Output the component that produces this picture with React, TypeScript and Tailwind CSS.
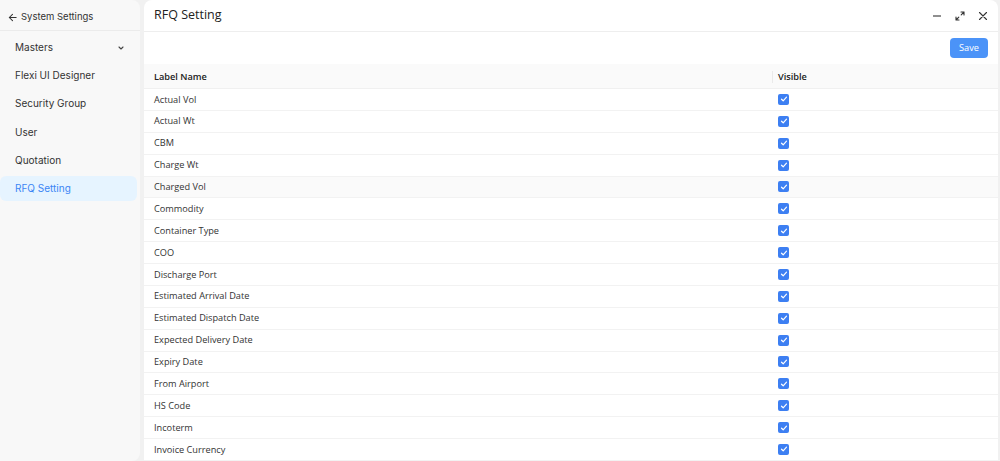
import React from "react";

const rows = [
  "Actual Vol",
  "Actual Wt",
  "CBM",
  "Charge Wt",
  "Charged Vol",
  "Commodity",
  "Container Type",
  "COO",
  "Discharge Port",
  "Estimated Arrival Date",
  "Estimated Dispatch Date",
  "Expected Delivery Date",
  "Expiry Date",
  "From Airport",
  "HS Code",
  "Incoterm",
  "Invoice Currency",
];

const menu = ["Masters", "Flexi UI Designer", "Security Group", "User", "Quotation", "RFQ Setting"];

function Check() {
  return (
    <span className="flex h-[11px] w-[11px] items-center justify-center rounded-[2px] bg-[#3d7ff2]">
      <svg width="8" height="8" viewBox="0 0 8 8" fill="none">
        <path d="M1.5 4.2 L3.2 5.8 L6.5 2.2" stroke="white" strokeWidth="1.2" strokeLinecap="round" strokeLinejoin="round" />
      </svg>
    </span>
  );
}

export default function App() {
  return (
    <div className="flex h-[461px] w-[1000px] overflow-hidden bg-[#f1f1f1]" style={{ fontFamily: "'Open Sans', 'Noto Sans', sans-serif" }}>
      <aside className="flex w-[140px] shrink-0 flex-col rounded-r-lg bg-[#f8f8f8]" style={{ fontFamily: "Inter, 'Noto Sans', sans-serif" }}>
        <div className="flex h-[31px] items-center gap-[3px] border-b border-[#ebebeb] pl-[7px] pt-[5px] text-[9.5px] text-[#333]">
          <svg width="11" height="11" viewBox="0 0 12 12" fill="none">
            <path d="M10 6H2.5M6 2.5L2.5 6L6 9.5" stroke="#333" strokeWidth="1.1" strokeLinecap="round" strokeLinejoin="round" />
          </svg>
          <span>System Settings</span>
        </div>
        <nav className="flex flex-col gap-[3.2px] pt-[4px] pr-[3px]">
          {menu.map((m) => {
            const active = m === "RFQ Setting";
            return (
              <div
                key={m}
                className={`flex h-[25px] items-center justify-between rounded-md pl-[15px] pr-[12px] text-[10px] ${
                  active ? "bg-[#e6f4ff] text-[#3b86f5]" : "text-[#333]"
                }`}
              >
                <span>{m}</span>
                {m === "Masters" && (
                  <svg width="8" height="8" viewBox="0 0 8 8" fill="none">
                    <path d="M2 3L4 5L6 3" stroke="#444" strokeWidth="1.1" strokeLinecap="round" strokeLinejoin="round" />
                  </svg>
                )}
              </div>
            );
          })}
        </nav>
      </aside>

      <main className="ml-[4px] mr-[2px] flex flex-1 flex-col rounded-t-lg bg-white">
        <div className="flex h-[32px] shrink-0 items-center justify-between border-b border-[#eeeeee] pl-[10px] pr-[10px]">
          <span className="text-[12.5px] text-[#222]">RFQ Setting</span>
          <div className="flex items-center gap-[13px] text-[#333]">
            <svg width="10" height="10" viewBox="0 0 10 10" fill="none">
              <path d="M1 5H9" stroke="#333" strokeWidth="1.1" />
            </svg>
            <svg width="10" height="10" viewBox="0 0 10 10" fill="none">
              <path d="M6 1H9V4M9 1L6.2 3.8M4 9H1V6M1 9L3.8 6.2" stroke="#333" strokeWidth="1.1" strokeLinecap="round" strokeLinejoin="round" />
            </svg>
            <svg width="10" height="10" viewBox="0 0 10 10" fill="none">
              <path d="M1.5 1.5L8.5 8.5M8.5 1.5L1.5 8.5" stroke="#333" strokeWidth="1.1" strokeLinecap="round" />
            </svg>
          </div>
        </div>
        <div className="flex h-[32px] shrink-0 items-center justify-end pr-[10px]">
          <button className="h-[20px] w-[38px] rounded-[4px] bg-[#4b93f8] text-[9.2px] text-white">Save</button>
        </div>
        <div className="flex flex-col">
          <div className="flex h-[25px] items-center border-b border-[#f0f0f0] bg-[#fafafa] pt-[1px] text-[9.2px] font-semibold text-[#222]">
            <div className="w-[628px] pl-[10px]">Label Name</div>
            <div className="flex h-full items-center">
              <span className="h-[12px] w-px bg-[#eaeaea]" />
              <span className="pl-[5px]">Visible</span>
            </div>
          </div>
          {rows.map((r) => (
            <div
              key={r}
              className={`flex h-[21.875px] shrink-0 items-center border-b border-[#f2f2f2] text-[9.2px] text-[#333] ${
                r === "Charged Vol" ? "bg-[#fafafa]" : ""
              }`}
            >
              <div className="w-[634px] pl-[10px]">{r}</div>
              <Check />
            </div>
          ))}
        </div>
      </main>
    </div>
  );
}
